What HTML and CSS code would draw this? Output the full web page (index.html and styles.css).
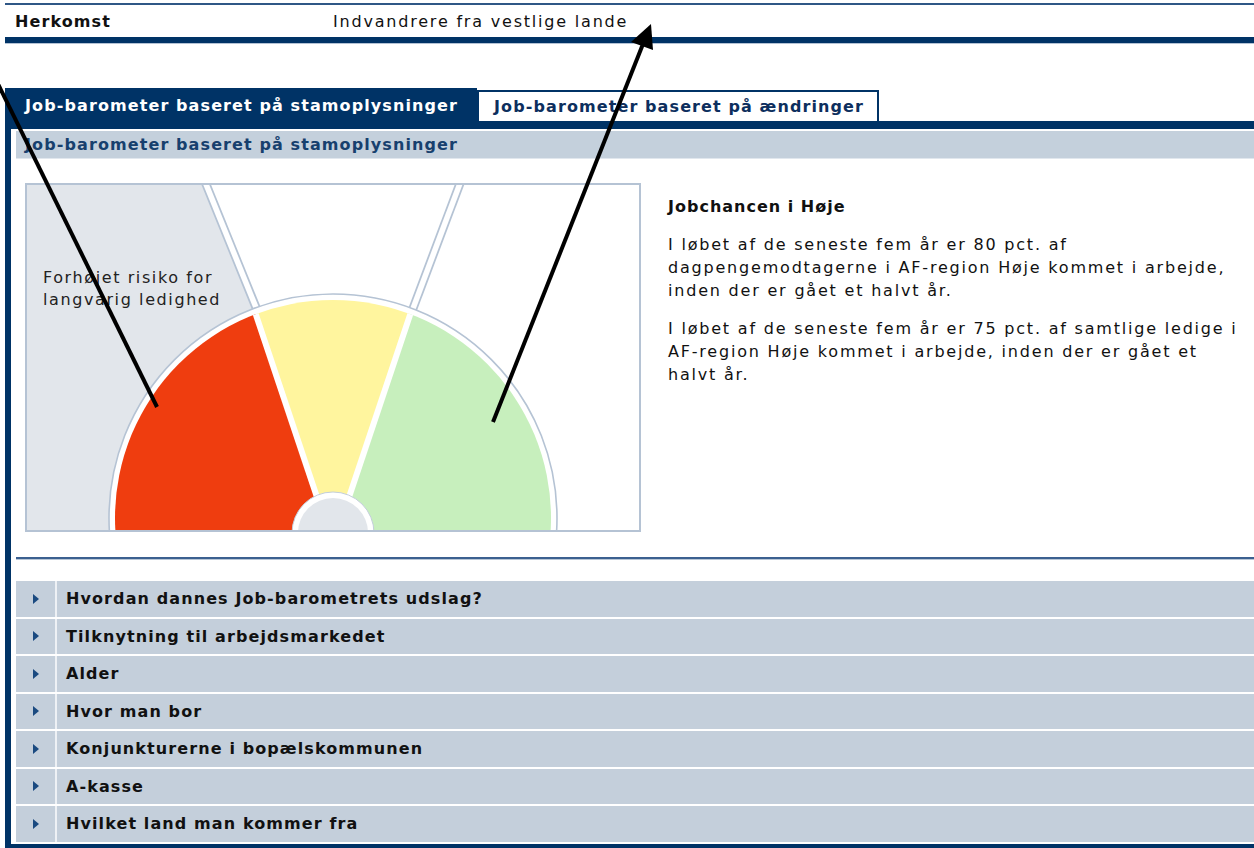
FILE: index.html
```html
<!DOCTYPE html>
<html lang="da">
<head>
<meta charset="utf-8">
<title>Job-barometer</title>
<link rel="stylesheet" href="styles.css">
</head>
<body>
<div class="page">
  <div class="origin">
    <div class="origin-label">Herkomst</div>
    <div class="origin-value">Indvandrere fra vestlige lande</div>
  </div>

  <div class="tabs">
    <div class="tab tab-active">Job-barometer baseret på stamoplysninger</div>
    <div class="tab tab-other">Job-barometer baseret på ændringer</div>
  </div>

  <div class="panel">
    <div class="subhead">Job-barometer baseret på stamoplysninger</div>

    <div class="result">
      <div class="gauge">
        <svg width="617" height="350" viewBox="0 0 617 350">
          <defs>
            <clipPath id="frame"><rect x="1" y="1" width="615" height="348"/></clipPath>
            <clipPath id="dial"><circle cx="308" cy="335" r="218"/></clipPath>
          </defs>
          <rect x="1" y="1" width="614" height="347" fill="#fff"/>
          <g clip-path="url(#frame)">
            <!-- zone for elevated risk -->
            <polygon points="1,1 178.5,1 322,349 1,349" fill="#e2e6eb"/>
            <!-- double divider lines of the upper zones -->
            <line x1="178.5" y1="-5" x2="322" y2="349" stroke="#b5c3d4" stroke-width="9"/>
            <line x1="178.5" y1="-5" x2="322" y2="349" stroke="#fff" stroke-width="5.5"/>
            <line x1="437" y1="-5" x2="304" y2="349" stroke="#b5c3d4" stroke-width="9"/>
            <line x1="437" y1="-5" x2="304" y2="349" stroke="#fff" stroke-width="5.5"/>
            <!-- dial -->
            <circle cx="308" cy="335" r="224" fill="#fff" stroke="#b5c3d4" stroke-width="1.6"/>
            <g clip-path="url(#dial)">
              <polygon points="308,362 152,-104 -100,-104 -100,349 308,349" fill="#ef3d0f"/>
              <polygon points="308,362 152,-104 462,-98" fill="#fff59e"/>
              <polygon points="308,362 462,-98 700,-98 700,349 308,349" fill="#c7efbd"/>
              <line x1="308" y1="362" x2="152" y2="-104" stroke="#fff" stroke-width="6"/>
              <line x1="308" y1="362" x2="462" y2="-98" stroke="#fff" stroke-width="6"/>
            </g>
            <!-- hub -->
            <circle cx="308" cy="350" r="41" fill="#fff" stroke="#c3cedb" stroke-width="1"/>
            <circle cx="308" cy="350" r="35" fill="#e2e6eb"/>
            <text class="zone-text" x="18" y="100">Forhøjet risiko for</text>
            <text class="zone-text" x="18" y="122">langvarig ledighed</text>
          </g>
          <rect x="1" y="1" width="614" height="347" fill="none" stroke="#b5c3d4" stroke-width="2"/>
        </svg>
      </div>
      <div class="info">
        <h2>Jobchancen i Høje</h2>
        <p>I løbet af de seneste fem år er 80 pct. af dagpengemodtagerne i AF-region Høje kommet i arbejde, inden der er gået et halvt år.</p>
        <p>I løbet af de seneste fem år er 75 pct. af samtlige ledige i AF-region Høje kommet i arbejde, inden der er gået et halvt år.</p>
      </div>
    </div>

    <div class="divider"></div>

    <ul class="factors">
      <li class="factor"><span class="factor-icon"><span class="caret"></span></span><span class="factor-label">Hvordan dannes Job-barometrets udslag?</span></li>
      <li class="factor"><span class="factor-icon"><span class="caret"></span></span><span class="factor-label">Tilknytning til arbejdsmarkedet</span></li>
      <li class="factor"><span class="factor-icon"><span class="caret"></span></span><span class="factor-label">Alder</span></li>
      <li class="factor"><span class="factor-icon"><span class="caret"></span></span><span class="factor-label">Hvor man bor</span></li>
      <li class="factor"><span class="factor-icon"><span class="caret"></span></span><span class="factor-label">Konjunkturerne i bopælskommunen</span></li>
      <li class="factor"><span class="factor-icon"><span class="caret"></span></span><span class="factor-label">A-kasse</span></li>
      <li class="factor"><span class="factor-icon"><span class="caret"></span></span><span class="factor-label">Hvilket land man kommer fra</span></li>
    </ul>
  </div>

  <!-- pointer arrows laid over the page -->
  <svg class="pointers" width="1254" height="848" viewBox="0 0 1254 848">
    <line x1="-2" y1="84" x2="157" y2="407" stroke="#000" stroke-width="4"/>
    <line x1="493" y1="422" x2="643" y2="44" stroke="#000" stroke-width="4"/>
    <polygon points="651,24 653,50 631,42" fill="#000"/>
  </svg>
</div>
</body>
</html>
```

FILE: styles.css
```css
body {
  margin: 0;
  background: #fff;
  font-family: "DejaVu Sans", Verdana, sans-serif;
  font-size: 16px;
  letter-spacing: 1.8px;
  color: #111;
}

.page {
  position: relative;
  width: 1254px;
  height: 848px;
  overflow: hidden;
  padding-left: 5px;
  box-sizing: border-box;
}

/* bold labels are set a little tighter than body copy */
.origin-label,
.tab,
.subhead,
.info h2,
.factor-label {
  font-weight: bold;
  letter-spacing: 1.1px;
}

/* origin row */
.origin {
  margin-top: 3px;
  height: 32px;
  display: flex;
  align-items: center;
  border-top: 2px solid #2f5786;
  border-bottom: 6px solid #003366;
  box-shadow: 0 1px 0 #b3c2d4;
}

.origin-label {
  width: 318px;
  padding-left: 10px;
}

/* tabs */
.tabs {
  display: flex;
  align-items: flex-end;
  margin-top: 45px;
  height: 33px;
}

.tab {
  display: flex;
  align-items: center;
  box-sizing: border-box;
  white-space: nowrap;
}

.tab-active {
  width: 472px;
  height: 33px;
  padding: 2px 0 0 20px;
  background: #003366;
  color: #fff;
}

.tab-other {
  width: 402px;
  height: 31px;
  padding-left: 15px;
  background: #fff;
  color: #0d2f5e;
  border: 2px solid #003366;
  border-bottom: 0;
}

/* panel */
.panel {
  border-left: 6px solid #003366;
  border-top: 8px solid #003366;
  border-bottom: 4px solid #003366;
  padding: 2px 0 2px 5px;
}

.subhead {
  height: 27px;
  display: flex;
  align-items: center;
  padding-left: 9px;
  background: #c4d0dc;
  color: #17406e;
  border-bottom: 1px solid #e1e7ee;
}

.result {
  display: flex;
  padding: 24px 0 0 9px;
}

.gauge {
  flex: none;
  width: 617px;
  height: 350px;
}

.gauge svg {
  display: block;
}

.zone-text {
  font-family: "DejaVu Sans", Verdana, sans-serif;
  font-size: 16px;
  letter-spacing: 1.6px;
  fill: #222;
}

.info {
  margin-left: 26px;
  width: 585px;
  padding-top: 12px;
  line-height: 23px;
}

.info h2 {
  margin: 0 0 15px;
  font-size: 16px;
  line-height: 23px;
  letter-spacing: 1px;
}

.info p {
  margin: 0 0 15px;
}

.divider {
  margin-top: 24px;
  height: 2px;
  background: #3b6090;
  box-shadow: 0 1px 0 #b8c6d6;
}

/* factor list */
.factors {
  list-style: none;
  margin: 22px 0 0;
  padding: 0;
  display: flex;
  flex-direction: column;
  gap: 2px;
}

.factor {
  display: flex;
  height: 35.5px;
  background: #c4cfdb;
}

.factor-icon {
  flex: none;
  width: 39px;
  display: flex;
  align-items: center;
  justify-content: center;
  border-right: 2px solid #eef1f5;
}

.caret {
  width: 0;
  height: 0;
  border-top: 5px solid transparent;
  border-bottom: 5px solid transparent;
  border-left: 6px solid #1a4a80;
}

.factor-label {
  display: flex;
  align-items: center;
  padding-left: 9px;
  color: #111;
}

.pointers {
  position: absolute;
  left: 0;
  top: 0;
  pointer-events: none;
}
```
